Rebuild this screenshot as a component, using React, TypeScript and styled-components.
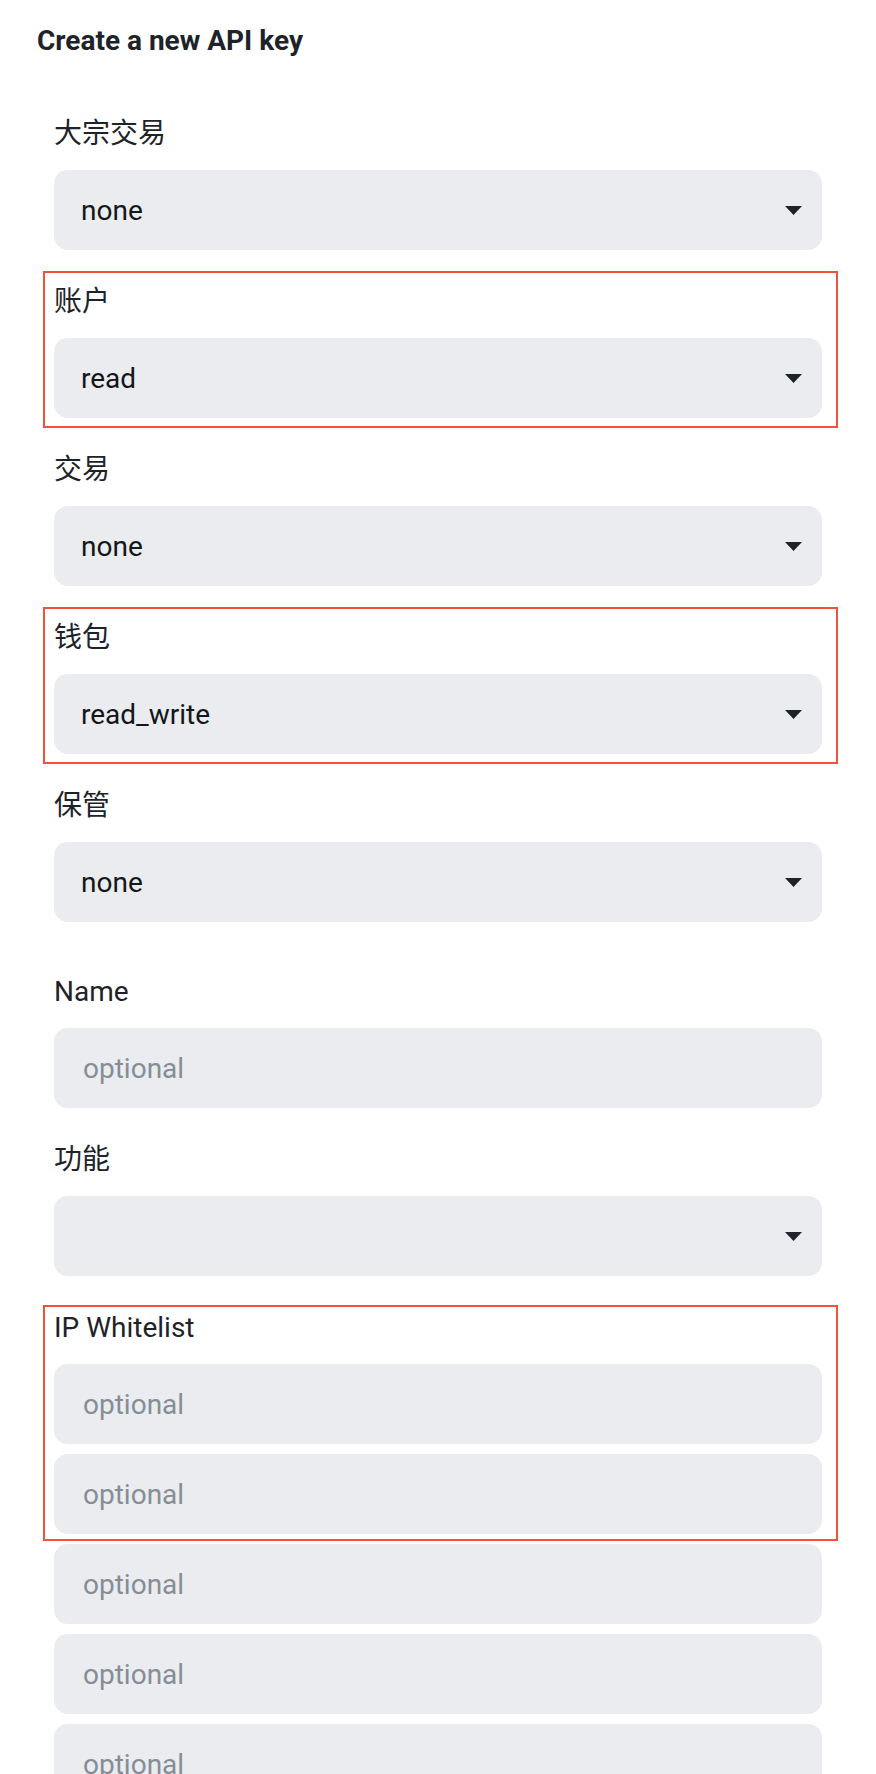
import React from "react";
import styled, { createGlobalStyle } from "styled-components";

const GlobalStyle = createGlobalStyle`
  body {
    margin: 0;
    background: #ffffff;
    font-family: Roboto, "Noto Sans CJK SC", sans-serif;
    color: #1e2329;
  }
`;

const Page = styled.div`
  padding: 21px 37px 40px;
`;

const Title = styled.h1`
  margin: 0 0 53px;
  font-size: 28px;
  line-height: 40px;
  font-weight: 700;
  color: #1e2329;
`;

const Form = styled.div`
  display: flex;
  flex-direction: column;
  gap: 50px;
  padding: 0 17px;
`;

const Group = styled.div`
  display: flex;
  flex-direction: column;
  gap: 32px;
`;

const FieldBox = styled.div`
  display: flex;
  flex-direction: column;
  gap: 16px;
`;

const Label = styled.div`
  font-size: 28px;
  line-height: 40px;
  color: #1e2329;
`;

const Control = styled.div`
  display: flex;
  align-items: center;
  justify-content: space-between;
  height: 80px;
  box-sizing: border-box;
  padding: 0 20px 0 27px;
  border-radius: 14px;
  background: #eaecf0;
  font-size: 28px;
  color: #14171a;
  cursor: pointer;
`;

const TextInput = styled.input`
  display: block;
  width: 100%;
  height: 80px;
  box-sizing: border-box;
  padding: 0 20px 0 29px;
  border: none;
  border-radius: 14px;
  background: #eaecf0;
  font-family: inherit;
  font-size: 28px;
  color: #14171a;
  outline: none;

  &::placeholder {
    color: #878d95;
  }
`;

const InputStack = styled.div<{ $offset?: number }>`
  display: flex;
  flex-direction: column;
  gap: 10px;
  margin-top: ${(p) => p.$offset ?? 0}px;
`;

// red annotation frame drawn over a part of the form
const Highlight = styled.div<{ $top: number; $bottom: number }>`
  position: relative;

  &::after {
    content: "";
    position: absolute;
    top: -${(p) => p.$top}px;
    bottom: -${(p) => p.$bottom}px;
    left: -11px;
    right: -16px;
    border: 2px solid #f0533a;
    pointer-events: none;
  }
`;

const Caret = () => (
  <svg width="17" height="9" viewBox="0 0 17 9">
    <path d="M0 0h17L8.5 9z" fill="#1e2329" />
  </svg>
);

type SelectFieldProps = { label: string; value: string };

const SelectField = ({ label, value }: SelectFieldProps) => (
  <FieldBox>
    <Label>{label}</Label>
    <Control>
      <span>{value}</span>
      <Caret />
    </Control>
  </FieldBox>
);

const permissions = [
  { label: "大宗交易", value: "none" },
  { label: "账户", value: "read", marked: true },
  { label: "交易", value: "none" },
  { label: "钱包", value: "read_write", marked: true },
  { label: "保管", value: "none" },
];

export default function App() {
  return (
    <>
      <GlobalStyle />
      <Page>
        <Title>Create a new API key</Title>
        <Form>
          <Group>
            {permissions.map((p) =>
              p.marked ? (
                <Highlight key={p.label} $top={11} $bottom={10}>
                  <SelectField label={p.label} value={p.value} />
                </Highlight>
              ) : (
                <SelectField key={p.label} label={p.label} value={p.value} />
              )
            )}
          </Group>
          <Group>
            <FieldBox>
              <Label>Name</Label>
              <TextInput placeholder="optional" />
            </FieldBox>
            <SelectField label="功能" value="" />
            <div>
              <Highlight $top={3} $bottom={7}>
                <FieldBox>
                  <Label>IP Whitelist</Label>
                  <InputStack>
                    <TextInput placeholder="optional" />
                    <TextInput placeholder="optional" />
                  </InputStack>
                </FieldBox>
              </Highlight>
              <InputStack $offset={10}>
                <TextInput placeholder="optional" />
                <TextInput placeholder="optional" />
                <TextInput placeholder="optional" />
              </InputStack>
            </div>
          </Group>
        </Form>
      </Page>
    </>
  );
}
